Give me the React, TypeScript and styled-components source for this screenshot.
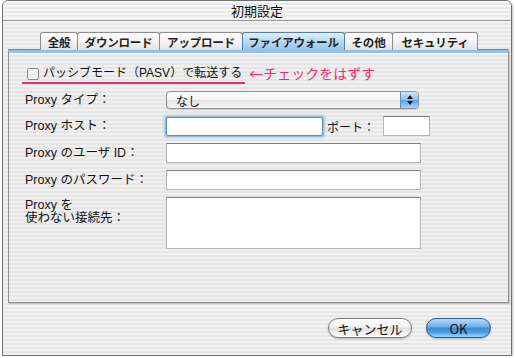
import styled, { createGlobalStyle } from "styled-components";

const GlobalStyle = createGlobalStyle`
    html, body {
        margin: 0;
        padding: 0;
        background: #ffffff;
    }
    body {
        font-family: "Liberation Sans", "Noto Sans CJK JP", sans-serif;
        color: #111;
    }
`;

const pinstripe = `repeating-linear-gradient(to bottom, #f3f3f3 0px, #f3f3f3 2px, #e7e7e7 2px, #e7e7e7 4px)`;

const tabs = [
    { label: "全般", width: 38 },
    { label: "ダウンロード", width: 83 },
    { label: "アップロード", width: 84 },
    { label: "ファイアウォール", width: 103 },
    { label: "その他", width: 49 },
    { label: "セキュリティ", width: 86 },
];
const activeTab = "ファイアウォール";


export default function App() {
    return (
        <>
            <GlobalStyle />
            <Window>
                <TitleBar>{"初期設定"}</TitleBar>
                <Content>
                    <TabRow>
                        {tabs.map((t) => (
                            <Tab key={t.label} $width={t.width} $active={t.label === activeTab}>{t.label}</Tab>
                        ))}
                    </TabRow>
                    <Pane>
                        <CheckLine>
                            <CheckRow>
                                <CheckBox />
                                <CheckText>{"パッシブモード（PASV）で転送する"}</CheckText>
                            </CheckRow>
                            <Note>{"←チェックをはずす"}</Note>
                        </CheckLine>
                        <Form>
                            <Label>{"Proxy タイプ："}</Label>
                            <Popup>
                                <PopupValue>{"なし"}</PopupValue>
                                <PopupArrow>
                                    <svg width="8" height="12" viewBox="0 0 8 12">
                                        <path d="M4 1 L7 5 L1 5 Z" fill="#1a1a1a" />
                                        <path d="M4 11 L7 7 L1 7 Z" fill="#1a1a1a" />
                                    </svg>
                                </PopupArrow>
                            </Popup>

                            <Label>{"Proxy ホスト："}</Label>
                            <HostLine>
                                <TextField $width={157} $focused />
                                <PortLabel>{"ポート："}</PortLabel>
                                <TextField $width={47} $height={20} />
                            </HostLine>

                            <Label>{"Proxy のユーザ ID："}</Label>
                            <TextField $width={255} $height={20} />

                            <Label>{"Proxy のパスワード："}</Label>
                            <TextField $width={255} $height={20} />

                            <Label $multi>{"Proxy を"}<br />{"使わない接続先："}</Label>
                            <TextField $width={255} $height={52} />
                        </Form>
                    </Pane>
                </Content>
                <Footer>
                    <PillButton>{"キャンセル"}</PillButton>
                    <PillButton $primary>{"OK"}</PillButton>
                </Footer>
            </Window>
        </>
    );
}


const Window = styled.div`
    margin-left: 2px;
    width: 508px;
    height: 354px;
    border: 1px solid #6f6f6f;
    border-radius: 6px 6px 0 0;
    background: ${pinstripe};
    display: flex;
    flex-direction: column;
    overflow: hidden;
    box-shadow: 1px 1px 2px rgba(0, 0, 0, 0.25);
`;

const TitleBar = styled.div`
    height: 19px;
    flex: none;
    border-bottom: 1px solid #9c9c9c;
    display: flex;
    align-items: center;
    justify-content: center;
    font-family: "Noto Sans CJK JP", sans-serif;
    font-size: 13px;
    color: #111;
    background: repeating-linear-gradient(to bottom, #f7f7f7 0px, #f7f7f7 2px, #e9e9e9 2px, #e9e9e9 4px);
`;

const Content = styled.div`
    flex: none;
    padding: 11px 2px 0 5px;
    display: flex;
    flex-direction: column;
`;

const TabRow = styled.div`
    height: 18px;
    display: flex;
    justify-content: center;
    padding-left: 2px;
`;

const Tab = styled.div<{ $active?: boolean; $width: number }>`
    width: ${(p) => p.$width}px;
    height: 18px;
    box-sizing: border-box;
    margin-left: -1px;
    display: flex;
    align-items: center;
    justify-content: center;
    font-family: "Noto Sans CJK JP", sans-serif;
    font-size: 11.5px;
    font-weight: bold;
    letter-spacing: -0.2px;
    color: #222;
    border: 1px solid ${(p) => (p.$active ? "#4f7fae" : "#8c8c8c")};
    border-bottom: none;
    border-radius: 3px 3px 0 0;
    background: ${(p) =>
        p.$active
            ? "linear-gradient(to bottom, #e4f1fb 0%, #b6d8f3 50%, #95c6ee 100%)"
            : "linear-gradient(to bottom, #ffffff 0%, #f4f4f4 50%, #e2e2e2 100%)"};
    position: relative;
    z-index: ${(p) => (p.$active ? 1 : 0)};
`;

const Pane = styled.div`
    height: 253px;
    box-sizing: border-box;
    border: 1px solid #8f8f8f;
    border-top: 3px solid #93c1e6;
    box-shadow: inset 0 1px 0 #ffffff, 0 -1px 0 #5f8fbd, 1px 1px 1px rgba(0, 0, 0, 0.15);
    background: repeating-linear-gradient(to bottom, #f1f1f1 0px, #f1f1f1 2px, #e5e5e5 2px, #e5e5e5 4px);
    padding: 13px 0 0 13px;
    display: flex;
    flex-direction: column;
`;

const CheckLine = styled.div`
    display: flex;
    align-items: flex-start;
`;

const CheckRow = styled.div`
    display: flex;
    align-items: center;
    gap: 4px;
    padding: 0 3px 1px 5px;
    border-bottom: 2px solid #ea2f6d;
`;

const CheckBox = styled.div`
    width: 12px;
    height: 12px;
    box-sizing: border-box;
    border: 1px solid #8a8a8a;
    border-radius: 2px;
    background: linear-gradient(to bottom, #ffffff 0%, #ececec 60%, #f8f8f8 100%);
`;

const CheckText = styled.span`
    font-family: "Liberation Sans", "Noto Sans CJK JP", sans-serif;
    font-size: 12px;
    line-height: 15px;
    color: #111;
`;

const Note = styled.span`
    margin-left: 4px;
    font-family: "Noto Sans CJK JP", sans-serif;
    font-size: 14px;
    line-height: 15px;
    color: #ee2c72;
`;

const Form = styled.div`
    margin-top: 7px;
    padding-left: 3px;
    display: grid;
    grid-template-columns: 141px auto;
    justify-content: start;
    align-items: center;
    row-gap: 7px;
`;

const Label = styled.div<{ $multi?: boolean }>`
    font-family: "Liberation Sans", "Noto Sans CJK JP", sans-serif;
    font-size: 12.5px;
    line-height: ${(p) => (p.$multi ? "13px" : "16px")};
    color: #111;
    align-self: ${(p) => (p.$multi ? "start" : "center")};
    padding-top: ${(p) => (p.$multi ? "2px" : "0")};
`;

const Popup = styled.div`
    width: 253px;
    height: 18px;
    box-sizing: border-box;
    border: 1px solid #8e8e8e;
    border-radius: 4px;
    display: flex;
    overflow: hidden;
    background: linear-gradient(to bottom, #ffffff 0%, #f3f3f3 50%, #e2e2e2 51%, #f6f6f6 100%);
    box-shadow: 0 1px 1px rgba(0, 0, 0, 0.15);
`;

const PopupValue = styled.div`
    flex: 1;
    padding-left: 9px;
    display: flex;
    align-items: center;
    font-family: "Noto Sans CJK JP", sans-serif;
    font-size: 12px;
    color: #111;
`;

const PopupArrow = styled.div`
    width: 17px;
    display: flex;
    align-items: center;
    justify-content: center;
    border-left: 1px solid #5f8fbf;
    background: linear-gradient(to bottom, #cfe6f8 0%, #8cc0ec 50%, #5fa2de 51%, #a9d5f6 100%);
`;

const HostLine = styled.div`
    display: flex;
    align-items: center;
`;

const PortLabel = styled.span`
    margin: 0 8px 0 4px;
    font-family: "Noto Sans CJK JP", sans-serif;
    font-size: 12px;
    color: #111;
`;

const TextField = styled.div<{ $width: number; $height?: number; $focused?: boolean }>`
    width: ${(p) => p.$width}px;
    height: ${(p) => p.$height ?? 19}px;
    box-sizing: border-box;
    background: #ffffff;
    border: 1px solid #b4b4b4;
    border-top-color: ${(p) => (p.$focused ? "#6f9fcc" : "#7e7e7e")};
    ${(p) =>
        p.$focused &&
        `
        border: 1px solid #5f8fbe;
        box-shadow: 0 0 0 1px #93bde3, 0 0 2px 2px rgba(120, 170, 220, 0.5);
        border-radius: 2px;
    `}
`;

const Footer = styled.div`
    flex: 1;
    display: flex;
    justify-content: flex-end;
    align-items: flex-start;
    gap: 14px;
    padding: 15px 20px 0 0;
`;

const PillButton = styled.div<{ $primary?: boolean }>`
    width: ${(p) => (p.$primary ? "65px" : "84px")};
    height: 20px;
    box-sizing: border-box;
    border-radius: 10px;
    display: flex;
    align-items: center;
    justify-content: center;
    font-family: "Noto Sans CJK JP", sans-serif;
    font-size: 13px;
    color: #111;
    border: 1px solid ${(p) => (p.$primary ? "#2c5a8c" : "#7a7a7a")};
    background: ${(p) =>
        p.$primary
            ? "linear-gradient(to bottom, #b9dcf8 0%, #6aaee8 45%, #3a8bd6 50%, #4ea0e4 75%, #a6d6fb 100%)"
            : "linear-gradient(to bottom, #ffffff 0%, #f2f2f2 45%, #dedede 50%, #f0f0f0 75%, #ffffff 100%)"};
    box-shadow: 0 1px 2px rgba(0, 0, 0, 0.25);
`;
